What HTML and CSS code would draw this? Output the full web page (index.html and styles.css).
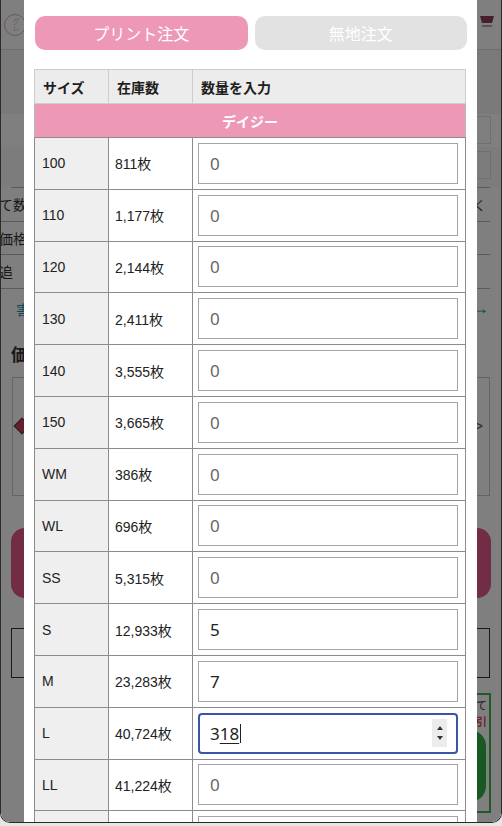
FILE: index.html
```html
<!DOCTYPE html>
<html lang="ja">
<head>
<meta charset="utf-8">
<title>プリント注文</title>
<link rel="stylesheet" href="styles.css">
</head>
<body>
<div class="screen">
  <div class="page">
    <header class="site-header">
      <span class="logo"><span class="logo-text">グレ</span></span>
      <span class="cart">
        <svg width="14" height="20" viewBox="0 0 14 20"><path d="M0 3h14l-2 7H2z" fill="#8a3e52"/><path d="M2 13h10" stroke="#8a3e52" stroke-width="1"/></svg>
      </span>
    </header>
    <div class="band band-a"></div>
    <div class="band band-b"><span class="fake-input"></span></div>
    <div class="band band-c"><span class="fake-input"></span></div>
    <div class="summary">
      <div class="sum-row"><span class="sum-label">て数</span><span class="sum-mark">く</span></div>
      <div class="sum-row"><span class="sum-label">価格</span></div>
      <div class="sum-row"><span class="sum-label">追</span></div>
    </div>
    <div class="link-row"><span>害</span><span class="arrow">→</span></div>
    <div class="price-title">価</div>
    <div class="price-box"><span class="diamond"></span><span class="chev">&gt;</span></div>
    <div class="cta"></div>
    <div class="outline-box"></div>
    <div class="green-box"><span class="gb-t">て</span><span class="gb-r">引</span><span class="gb-btn"></span></div>
  </div>
  <div class="dim"></div>

  <div class="modal">
    <div class="tabs">
      <div class="tab tab-on">プリント注文</div>
      <div class="tab tab-off">無地注文</div>
    </div>
    <table class="stock">
      <colgroup><col class="c1"><col class="c2"><col class="c3"></colgroup>
      <thead>
        <tr><th>サイズ</th><th>在庫数</th><th>数量を入力</th></tr>
      </thead>
      <tbody>
        <tr class="color-row"><td colspan="3">デイジー</td></tr>
        <tr><td class="size">100</td><td>811枚</td><td class="qty"><div class="qbox">0</div></td></tr>
        <tr><td class="size">110</td><td>1,177枚</td><td class="qty"><div class="qbox">0</div></td></tr>
        <tr><td class="size">120</td><td>2,144枚</td><td class="qty"><div class="qbox">0</div></td></tr>
        <tr><td class="size">130</td><td>2,411枚</td><td class="qty"><div class="qbox">0</div></td></tr>
        <tr><td class="size">140</td><td>3,555枚</td><td class="qty"><div class="qbox">0</div></td></tr>
        <tr><td class="size">150</td><td>3,665枚</td><td class="qty"><div class="qbox">0</div></td></tr>
        <tr><td class="size">WM</td><td>386枚</td><td class="qty"><div class="qbox">0</div></td></tr>
        <tr><td class="size">WL</td><td>696枚</td><td class="qty"><div class="qbox">0</div></td></tr>
        <tr><td class="size">SS</td><td>5,315枚</td><td class="qty"><div class="qbox">0</div></td></tr>
        <tr><td class="size">S</td><td>12,933枚</td><td class="qty"><div class="qbox set">5</div></td></tr>
        <tr><td class="size">M</td><td>23,283枚</td><td class="qty"><div class="qbox set">7</div></td></tr>
        <tr><td class="size">L</td><td>40,724枚</td><td class="qty"><div class="qbox set focus">3<span class="comp">18</span><span class="caret"></span><span class="spin"><span class="up"></span><span class="down"></span></span></div></td></tr>
        <tr><td class="size">LL</td><td>41,224枚</td><td class="qty"><div class="qbox">0</div></td></tr>
        <tr><td class="size"></td><td></td><td class="qty"><div class="qbox"></div></td></tr>
      </tbody>
    </table>
  </div>
</div>
</body>
</html>
```

FILE: styles.css
```css
* { box-sizing: border-box; }

body {
  margin: 0;
  background: #e6e6e6;
  font-family: "Liberation Sans", "Noto Sans CJK JP", sans-serif;
}

.screen {
  position: relative;
  width: 502px;
  height: 823px;
  overflow: hidden;
  background-color: #ffffff;
  border: 1px solid #2b2b2b;
  border-top: 0;
  border-radius: 0 0 10px 10px;
}

/* ---------- page behind the modal (dimmed by .dim) ---------- */
.page {
  width: 500px;
  height: 823px;
  background-color: #ffffff;
}

.site-header {
  height: 50px;
  background-color: #ffffff;
  border-bottom: 1px solid #dcdcdc;
  display: flex;
  align-items: center;
  justify-content: space-between;
  padding: 0 4px 0 3px;
}
.logo {
  width: 22px; height: 22px;
  border: 1px solid #cfb5b5;
  border-radius: 50%;
  display: flex; align-items: center; justify-content: center;
}
.logo-text { font-size: 7px; color: #cfb5b5; writing-mode: vertical-rl; }
.cart { padding-right: 3px; }

.band { height: 33px; }
.band-a { height: 64px; background-color: #f4f4f4; }
.band-b { background-color: #ffffff; padding: 2px 10px 0 0; display: flex; justify-content: flex-end; }
.band-c { height: 40px; background-color: #f8f8f8; padding: 4px 10px 0 0; display: flex; justify-content: flex-end; }
.fake-input { width: 20px; height: 28px; border: 1px solid #e0e0e0; }

.summary { margin: 0 11px 0 10px; border-top: 1px solid #b4b4b4; }
.sum-row {
  height: 33.5px;
  border-bottom: 1px solid #b4b4b4;
  display: flex; align-items: center; justify-content: space-between;
  font-size: 14px; color: #333;
  margin-left: -12px;
}
.sum-mark { font-size: 13px; padding-right: 4px; }

.link-row {
  height: 40px;
  display: flex; align-items: center; justify-content: space-between;
  padding: 0 12px 0 15px;
  color: #1e95a8; font-size: 14px;
}
.arrow { font-size: 18px; }

.price-title { font-weight: bold; font-size: 17px; color: #333; padding: 12px 0 0 10px; height: 48px; }
.price-box {
  margin: 0 11px; height: 119px;
  border: 1px solid #c8c8c8;
  display: flex; align-items: center; justify-content: space-between;
  padding: 0 6px 20px 3px;
}
.diamond { width: 12px; height: 12px; background-color: #d43e58; transform: rotate(45deg); border: 1px solid #444; }
.chev { color: #555; font-size: 14px; }

.cta { margin: 32px 10px 0; height: 70px; border-radius: 14px; background-color: #e5588a; }
.outline-box { margin: 30px 11px 0 10px; height: 50px; border: 1px solid #333; }
.green-box {
  margin: 15px 10px 0 auto; width: 300px; height: 120px;
  border: 2px solid #43b352;
  position: relative;
}
.gb-t { position: absolute; right: 2px; top: 2px; font-size: 11px; color: #333; }
.gb-r { position: absolute; right: 2px; top: 18px; font-size: 11px; color: #e04460; font-weight: bold; }
.gb-btn { position: absolute; right: 3px; top: 35px; width: 60px; height: 72px; border-radius: 16px; background-color: #2fb047; }

.dim {
  position: absolute;
  inset: 0;
  background-color: rgba(0, 0, 0, 0.5);
}

/* ---------- modal ---------- */
.modal {
  position: absolute;
  left: 23px;
  top: 0;
  bottom: 0;
  width: 453px;
  background: #fff;
  padding: 16px 10px 0 10px;
}

.tabs {
  display: flex;
  gap: 7px;
  margin-left: 1px;
}
.tab {
  flex: 1;
  height: 34px;
  border-radius: 10px;
  display: flex; align-items: center; justify-content: center;
  color: #fff;
  font-size: 16px;
  font-family: "Noto Sans CJK JP", sans-serif;
}
.tab-on { background: #ee98b8; }
.tab-off { background: #e2e2e2; }

.stock {
  margin-top: 19px;
  width: 432px;
  border-collapse: collapse;
  table-layout: fixed;
  font-size: 14px;
  color: #222;
}
.c1 { width: 74px; }
.c2 { width: 84px; }
.stock th {
  height: 34px;
  background: #ececec;
  border: 1px solid #cdcdcd;
  text-align: left;
  padding: 0 0 0 8px;
  font-weight: bold;
  font-family: "Noto Sans CJK JP", sans-serif;
  font-size: 14px;
  color: #1e1e1e;
}
.stock td {
  height: 51.8px;
  border: 1px solid #8c8c8c;
  padding: 0 0 0 6px;
}
.stock .color-row td {
  height: 34px;
  background: #ee98b8;
  color: #fff;
  font-weight: bold;
  text-align: center;
  font-family: "Noto Sans CJK JP", sans-serif;
  border: 1px solid #b9b9b9;
  border-bottom-color: #8c8c8c;
  padding: 0;
}
.stock td.size { background: #efefef; padding-left: 7px; }
.stock td.qty { padding: 0 7px 0 5px; }

.qbox {
  position: relative;
  height: 41px;
  border: 1px solid #a4a4a4;
  display: flex; align-items: center;
  padding-left: 11px;
  font-family: "Noto Sans", sans-serif;
  font-size: 17px;
  color: #666;
}
.qbox.set { color: #222; }
.qbox.focus {
  border: 2px solid #3a55a8;
  border-radius: 4px;
  padding-left: 10px;
}
.comp { text-decoration: underline; text-underline-offset: 3px; }
.caret { width: 1px; height: 19px; background: #222; margin-left: 1px; }
.spin {
  position: absolute; right: 9px; top: 4px;
  width: 15px; height: 28px;
  background: #ececec;
  display: flex; flex-direction: column; align-items: center; justify-content: center; gap: 6px;
}
.up { width: 0; height: 0; border-left: 3px solid transparent; border-right: 3px solid transparent; border-bottom: 4px solid #333; }
.down { width: 0; height: 0; border-left: 3px solid transparent; border-right: 3px solid transparent; border-top: 4px solid #333; }
```
